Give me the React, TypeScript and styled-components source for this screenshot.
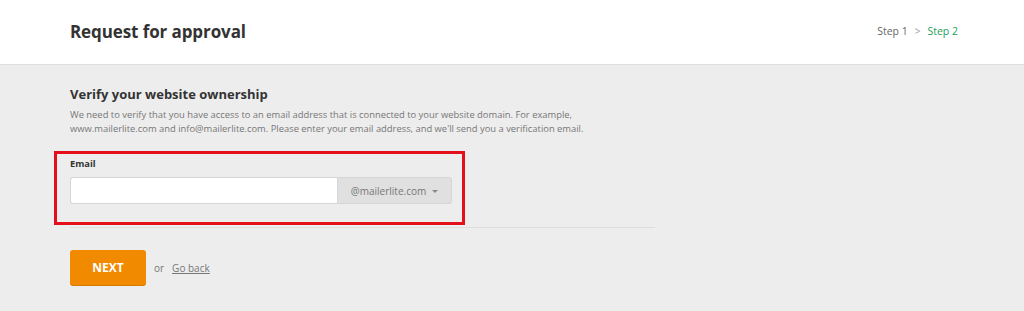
import React from "react";
import styled, { createGlobalStyle } from "styled-components";

const Global = createGlobalStyle`
  html, body { margin: 0; padding: 0; background: #ededed; }
  body { font-family: "Open Sans", "Liberation Sans", Arial, sans-serif; color: #333; }
  * { box-sizing: border-box; }
`;

const Header = styled.header`
  height: 65px;
  background: #fff;
  border-bottom: 1px solid #dedede;
  display: flex;
  align-items: center;
  justify-content: space-between;
  padding: 0 66px 2px 70px;
`;

const Title = styled.h1`
  margin: 0;
  font-size: 17px;
  font-weight: 700;
  color: #333;
  letter-spacing: -0.1px;
`;

const Steps = styled.div`
  display: flex;
  align-items: center;
  gap: 6px;
  font-size: 10.5px;
`;

const Step = styled.span<{ $active?: boolean }>`
  color: ${(p) => (p.$active ? "#1f9c5c" : "#666")};
`;

const Chevron = styled.span`
  color: #999;
  font-size: 10px;
  margin: 0 1px;
`;

const Main = styled.main`
  padding: 20px 0 26px 70px;
  width: 655px;
`;

const Heading = styled.h2`
  margin: 0 0 5px;
  font-size: 13px;
  font-weight: 700;
  color: #333;
  line-height: 18px;
`;

const Text = styled.p`
  margin: 0;
  font-size: 9.4px;
  line-height: 14px;
  color: #777;
  white-space: nowrap;
`;

const Highlight = styled.div`
  margin: 15px 0 0 -16px;
  width: fit-content;
  border: 3px solid #e3101c;
  padding: 4px 10px 18px 13px;
`;

const Label = styled.label`
  display: block;
  font-size: 9.3px;
  font-weight: 700;
  color: #333;
  line-height: 12px;
  margin-bottom: 7px;
`;

const InputRow = styled.div`
  display: flex;
  height: 27px;
`;

const Input = styled.input`
  width: 267px;
  height: 27px;
  border: 1px solid #d6d6d6;
  border-right: none;
  border-radius: 3px 0 0 3px;
  background: #fff;
  outline: none;
`;

const Addon = styled.div`
  width: 115px;
  height: 27px;
  display: flex;
  align-items: center;
  justify-content: center;
  gap: 6px;
  border: 1px solid #d6d6d6;
  border-radius: 0 3px 3px 0;
  background: #e0e0e0;
  color: #777;
  font-size: 10px;
`;

const Caret = styled.span`
  width: 0;
  height: 0;
  border-left: 3px solid transparent;
  border-right: 3px solid transparent;
  border-top: 3px solid #888;
  margin-top: 1px;
`;

const Divider = styled.hr`
  margin: 2px 0 0;
  border: none;
  border-top: 1px solid #dedede;
`;

const Actions = styled.div`
  display: flex;
  align-items: center;
  gap: 8px;
  margin-top: 22px;
`;

const Button = styled.button`
  width: 76px;
  height: 35px;
  border: none;
  border-radius: 3px;
  background: #f28a00;
  box-shadow: 0 1px 0 #d77a00;
  color: #fff;
  font-family: inherit;
  font-weight: 700;
  font-size: 12px;
  cursor: pointer;
`;

const Or = styled.span`
  font-size: 10px;
  color: #777;
`;

const Link = styled.a`
  font-size: 10px;
  color: #777;
  text-decoration: underline;
`;

export default function App() {
  return (
    <>
      <Global />
      <Header>
        <Title>Request for approval</Title>
        <Steps>
          <Step>Step 1</Step>
          <Chevron>&gt;</Chevron>
          <Step $active>Step 2</Step>
        </Steps>
      </Header>
      <Main>
        <Heading>Verify your website ownership</Heading>
        <Text>
          We need to verify that you have access to an email address that is connected to your website domain. For example,
          <br />
          www.mailerlite.com and info@mailerlite.com. Please enter your email address, and we'll send you a verification email.
        </Text>
        <Highlight>
          <Label>Email</Label>
          <InputRow>
            <Input type="text" />
            <Addon>
              @mailerlite.com <Caret />
            </Addon>
          </InputRow>
        </Highlight>
        <Divider />
        <Actions>
          <Button>NEXT</Button>
          <Or>or</Or>
          <Link href="#">Go back</Link>
        </Actions>
      </Main>
    </>
  );
}
